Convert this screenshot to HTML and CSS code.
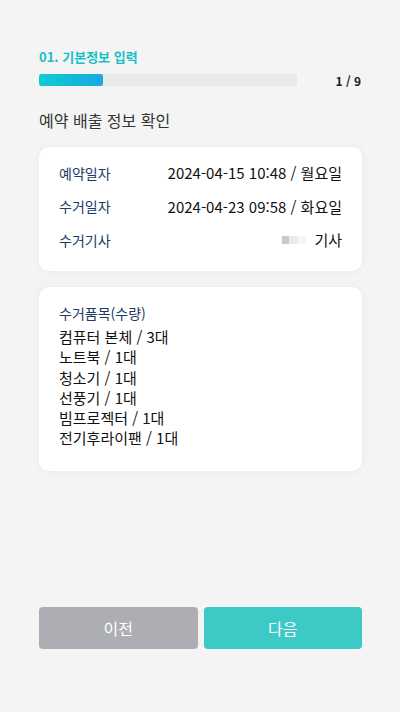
FILE: index.html
```html
<!DOCTYPE html>
<html lang="ko">
<head>
    <meta charset="UTF-8">
    <meta name="viewport" content="width=device-width, initial-scale=1.0">
    <title>예약 배출 정보 확인</title>
    <link rel="stylesheet" href="styles.css">
</head>
<body>
    <div class="page">
        <div class="step-title">01. 기본정보 입력</div>
        <div class="progress">
            <div class="track"><div class="fill" style="width: 64px"></div></div>
            <span class="count">1 / 9</span>
        </div>

        <h2 class="heading">예약 배출 정보 확인</h2>

        <div class="card info">
            <div class="row">
                <span class="label">예약일자</span>
                <span class="value">2024-04-15 10:48 / 월요일</span>
            </div>
            <div class="row">
                <span class="label">수거일자</span>
                <span class="value">2024-04-23 09:58 / 화요일</span>
            </div>
            <div class="row">
                <span class="label">수거기사</span>
                <span class="value"><span class="blur"><i class="b1"></i><i class="b2"></i><i class="b3"></i></span>기사</span>
            </div>
        </div>

        <div class="card items">
            <div class="label">수거품목(수량)</div>
            <ul>
                <li>컴퓨터 본체 / 3대</li>
                <li>노트북 / 1대</li>
                <li>청소기 / 1대</li>
                <li>선풍기 / 1대</li>
                <li>빔프로젝터 / 1대</li>
                <li>전기후라이팬 / 1대</li>
            </ul>
        </div>

        <div class="buttons">
            <button class="btn prev">이전</button>
            <button class="btn next">다음</button>
        </div>
    </div>
</body>
</html>
```

FILE: styles.css
```css
html, body
{
    margin: 0;
    padding: 0;
    background: #f4f4f4;
    font-family: "Noto Sans CJK KR", "Noto Sans", sans-serif;
    color: #111;
}

.page
{
    height: 100vh;
    box-sizing: border-box;
    padding: 47px 38px 63px 39px;
    display: flex;
    flex-direction: column;
}

.step-title
{
    color: #14c1c9;
    font-size: 13px;
    font-weight: 700;
    line-height: 19px;
}

.progress
{
    display: flex;
    align-items: center;
    margin-top: 8px;
    height: 12px;
}

.track
{
    width: 258px;
    height: 12px;
    background: #e8eaea;
    border-radius: 2px;
    overflow: hidden;
}

.fill
{
    height: 100%;
    border-radius: 2px;
    background: linear-gradient(to right, #0fcbd0, #1ca7e0);
}

.count
{
    margin-left: auto;
    margin-right: 1px;
    font-size: 12px;
    font-weight: 700;
    color: #222;
}

.heading
{
    margin: 24px 0 17px;
    font-size: 16px;
    font-weight: 400;
    line-height: 20px;
    color: #333;
}

.card
{
    background: #fff;
    border-radius: 10px;
    box-shadow: 0 0 8px rgba(0, 0, 0, 0.05);
}

.info
{
    padding: 9px 20px 14.5px;
}

.row
{
    display: flex;
    justify-content: space-between;
    align-items: center;
    height: 33.5px;
}

.label
{
    color: #1c3a66;
    font-size: 14px;
}

.value
{
    font-size: 15px;
    display: flex;
    align-items: center;
}

.blur
{
    display: flex;
    margin-right: 8px;
}

.blur i
{
    display: block;
    height: 8px;
}

.b1 { width: 7px; background: #c8c8c8; }
.b2 { width: 9px; background: #ebebeb; }
.b3 { width: 8px; background: #f6f6f6; }

.items
{
    margin-top: 16px;
    padding: 16px 20px 22px;
}

.items .label
{
    line-height: 20px;
}

.items ul
{
    list-style: none;
    margin: 4px 0 0;
    padding: 0;
}

.items li
{
    font-size: 15px;
    line-height: 20.3px;
}

.buttons
{
    margin-top: auto;
    display: flex;
    gap: 6px;
}

.btn
{
    flex: 1;
    height: 42px;
    border: none;
    border-radius: 4px;
    color: #fff;
    font-family: inherit;
    font-size: 16px;
}

.prev
{
    background: #adaeb3;
}

.next
{
    background: #3dc9c5;
}
```
